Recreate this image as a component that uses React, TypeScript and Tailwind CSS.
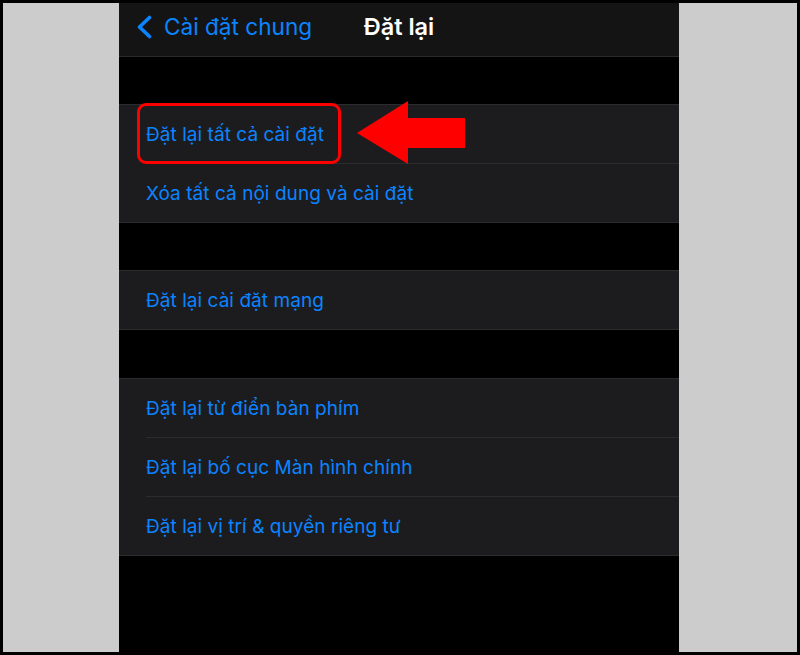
import React from "react";

const font = { fontFamily: "Inter, 'Noto Sans', 'Liberation Sans', sans-serif" };

function Row({ text, last }: { text: string; last?: boolean }) {
  return (
    <div className="bg-[#1c1c1e] h-[59px] flex flex-col">
      <div className="flex-1 flex items-center pl-[27px] pt-[2px]">
        <span className="text-[#0a84ff] text-[19px] tracking-[0.05px]">{text}</span>
      </div>
      <div className={last ? "h-px bg-[#2c2c2e]" : "h-px bg-[#2c2c2e] ml-[27px]"} />
    </div>
  );
}

function Group({ rows }: { rows: string[] }) {
  return (
    <div className="border-t border-[#2c2c2e]">
      {rows.map((r, i) => (
        <Row key={r} text={r} last={i === rows.length - 1} />
      ))}
    </div>
  );
}

export default function App() {
  return (
    <div className="w-[800px] h-[655px] bg-black p-[3px] flex" style={font}>
      <div className="w-[116px] bg-[#cccccc]" />
      <div className="w-[560px] bg-black relative flex flex-col">
        <div className="h-[54px] bg-[#141414] border-b border-[#2a2a2a] relative flex items-center pb-[5px]">
          <div className="flex items-center pl-[17px] gap-[11px]">
            <svg width="17" height="24" viewBox="0 0 17 24" className="mt-[1px]">
              <path d="M13.5 2.5 L3.5 12 L13.5 21.5" fill="none" stroke="#0a84ff" strokeWidth="3.6" strokeLinecap="round" strokeLinejoin="round" />
            </svg>
            <span className="text-[#0a84ff] text-[22.6px]">Cài đặt chung</span>
          </div>
          <div className="absolute inset-0 flex items-center justify-center pointer-events-none pb-[5px]">
            <span className="text-white text-[23.5px] font-semibold">Đặt lại</span>
          </div>
        </div>
        <div className="h-[47px]" />
        <Group rows={["Đặt lại tất cả cài đặt", "Xóa tất cả nội dung và cài đặt"]} />
        <div className="h-[47px]" />
        <Group rows={["Đặt lại cài đặt mạng"]} />
        <div className="h-[48px]" />
        <Group rows={["Đặt lại từ điển bàn phím", "Đặt lại bố cục Màn hình chính", "Đặt lại vị trí & quyền riêng tư"]} />

        <div className="absolute left-[18px] top-[100px] w-[204px] h-[61px] border-[3px] border-[#ff0000] rounded-[9px]" />
        <svg className="absolute left-[238px] top-[98px]" width="110" height="64" viewBox="0 0 110 64">
          <polygon points="0,32 51,0 51,17 108,17 108,47 51,47 51,63" fill="#ff0000" />
        </svg>
      </div>
      <div className="w-[118px] bg-[#cccccc]" />
    </div>
  );
}
